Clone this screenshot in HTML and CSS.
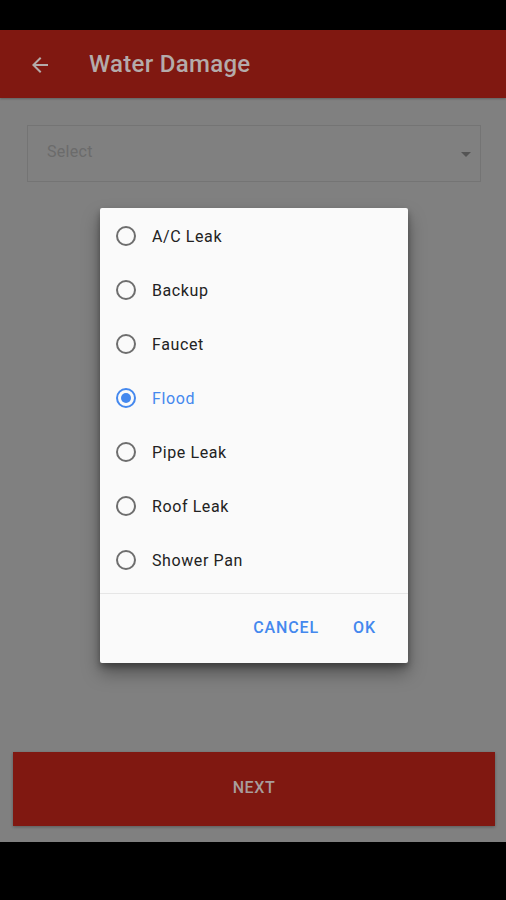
FILE: index.html
```html
<!DOCTYPE html>
<html>
<head>
<meta charset="utf-8">
<link rel="stylesheet" href="styles.css">
</head>
<body>
<div class="screen">
  <div class="status"></div>
  <header class="appbar">
    <svg class="back" width="24" height="24" viewBox="0 0 24 24"><path d="M20 11H7.83l5.59-5.59L12 4l-8 8 8 8 1.41-1.41L7.83 13H20v-2z" fill="#b4abaa"/></svg>
    <h1 class="title">Water Damage</h1>
  </header>
  <main class="content">
    <div class="select">
      <span class="select-text">Select</span>
      <span class="caret"></span>
    </div>
    <button class="next">NEXT</button>
  </main>
  <div class="navbar"></div>

  <div class="dialog">
    <ul class="options">
      <li class="option"><span class="radio"></span><span>A/C Leak</span></li>
      <li class="option"><span class="radio"></span><span>Backup</span></li>
      <li class="option"><span class="radio"></span><span>Faucet</span></li>
      <li class="option selected"><span class="radio"></span><span>Flood</span></li>
      <li class="option"><span class="radio"></span><span>Pipe Leak</span></li>
      <li class="option"><span class="radio"></span><span>Roof Leak</span></li>
      <li class="option"><span class="radio"></span><span>Shower Pan</span></li>
    </ul>
    <div class="actions">
      <span class="action">CANCEL</span>
      <span class="action">OK</span>
    </div>
  </div>
</div>
</body>
</html>
```
FILE: styles.css
```css
* { box-sizing: border-box; }
html, body { margin: 0; padding: 0; }
body { font-family: Roboto, "Noto Sans", Arial, sans-serif; background: #000; }
.screen {
  position: relative;
  width: 506px;
  height: 900px;
  display: flex;
  flex-direction: column;
  overflow: hidden;
}
.status { height: 30px; background: #000; flex: none; }
.appbar {
  height: 68px;
  flex: none;
  background: #801811;
  display: flex;
  align-items: center;
  padding-left: 28px;
  box-shadow: 0 1px 2px rgba(0,0,0,0.25);
  position: relative;
  z-index: 1;
}
.back { display: block; margin-top: 1px; }
.title {
  margin: 0 0 0 37px;
  font-size: 24px;
  font-weight: 500;
  color: #b4abaa;
  letter-spacing: 0.3px;
}
.content {
  flex: 1;
  background: #808080;
  display: flex;
  flex-direction: column;
  justify-content: space-between;
  padding: 27px 11px 16px 13px;
}
.select {
  margin: 0 14px 0 14px;
  height: 57px;
  border: 1px solid #747474;
  display: flex;
  align-items: center;
  justify-content: space-between;
  padding: 0 9px 0 19px;
}
.select-text { font-size: 16px; color: #6b6b6b; margin-top: -5px; letter-spacing: 0.3px; }
.caret {
  width: 0; height: 0;
  border-left: 5px solid transparent;
  border-right: 5px solid transparent;
  border-top: 5px solid #545454;
  margin-top: 1px;
}
.next {
  height: 74px;
  width: 100%;
  border: none;
  background: #801811;
  color: #a89d9c;
  font-family: Roboto, Arial, sans-serif;
  font-size: 16px;
  font-weight: 500;
  letter-spacing: 0.6px;
  box-shadow: 0 1px 3px rgba(0,0,0,0.3);
  padding: 0 0 4px 0;
}
.navbar { height: 58px; background: #000; flex: none; }

.dialog {
  position: absolute;
  left: 100px;
  top: 208px;
  width: 308px;
  height: 455px;
  background: #fafafa;
  border-radius: 2px;
  box-shadow: 0 10px 18px rgba(0,0,0,0.35), 0 4px 6px rgba(0,0,0,0.3);
  display: flex;
  flex-direction: column;
}
.options {
  list-style: none;
  margin: 0;
  padding: 1px 0 6px 0;
  border-bottom: 1px solid #e6e6e6;
}
.option {
  height: 54px;
  display: flex;
  align-items: center;
  padding-left: 16px;
  font-size: 16px;
  color: #222;
  letter-spacing: 0.6px;
}
.radio {
  width: 20px;
  height: 20px;
  border: 2px solid #6e6e6e;
  border-radius: 50%;
  margin-right: 16px;
  flex: none;
  display: flex;
  align-items: center;
  justify-content: center;
}
.option.selected { color: #4488ee; }
.option.selected .radio { border-color: #4488ee; }
.option.selected .radio::after {
  content: "";
  width: 10px;
  height: 10px;
  border-radius: 50%;
  background: #4488ee;
}
.actions {
  flex: 1;
  display: flex;
  justify-content: flex-end;
  align-items: center;
  gap: 34px;
  padding: 0 32px 2px 0;
}
.action {
  font-size: 16px;
  font-weight: 500;
  color: #4488ee;
  letter-spacing: 0.9px;
}
```
